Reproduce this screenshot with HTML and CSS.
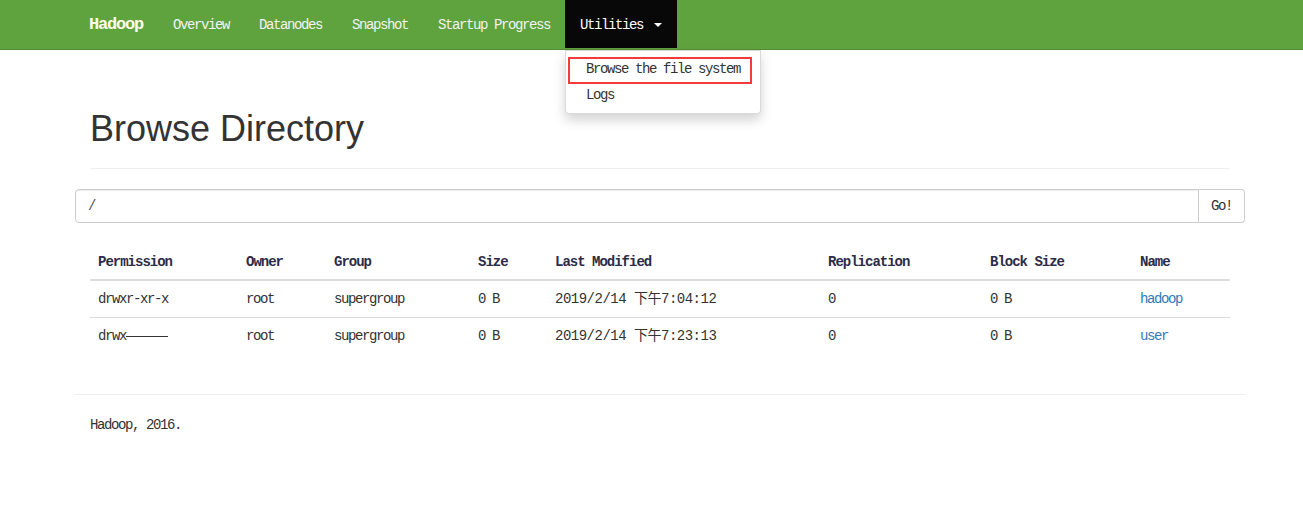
FILE: index.html
```html
<!DOCTYPE html>
<html lang="en">
<head>
<meta charset="utf-8">
<title>Browsing HDFS</title>
<link rel="stylesheet" href="styles.css">
</head>
<body>
<header class="navbar">
  <div class="container nav-inner">
    <a class="brand" href="#">Hadoop</a>
    <ul class="nav">
      <li><a href="#">Overview</a></li>
      <li><a href="#">Datanodes</a></li>
      <li><a href="#">Snapshot</a></li>
      <li><a href="#">Startup Progress</a></li>
      <li class="dropdown open">
        <a href="#" class="dropdown-toggle">Utilities <span class="caret"></span></a>
        <ul class="dropdown-menu">
          <li><a href="#">Browse the file system</a></li>
          <li><a href="#">Logs</a></li>
          <span class="highlight"></span>
        </ul>
      </li>
    </ul>
  </div>
</header>

<main class="container">
  <div class="page-header">
    <h1>Browse Directory</h1>
  </div>

  <form class="input-group">
    <input class="form-control" type="text" value="/">
    <button class="btn" type="button">Go!</button>
  </form>

  <div class="table-wrap">
    <table class="table">
      <colgroup>
        <col class="c-perm"><col class="c-owner"><col class="c-group"><col class="c-size">
        <col class="c-mod"><col class="c-rep"><col class="c-block"><col class="c-name">
      </colgroup>
      <thead>
        <tr>
          <th>Permission</th><th>Owner</th><th>Group</th><th>Size</th>
          <th>Last Modified</th><th>Replication</th><th>Block Size</th><th>Name</th>
        </tr>
      </thead>
      <tbody>
        <tr>
          <td>drwxr-xr-x</td><td>root</td><td>supergroup</td><td>0 B</td>
          <td class="date">2019/2/14 下午7:04:12</td><td>0</td><td>0 B</td><td><a href="#">hadoop</a></td>
        </tr>
        <tr>
          <td>drwx<span class="dash">------</span></td><td>root</td><td>supergroup</td><td>0 B</td>
          <td class="date">2019/2/14 下午7:23:13</td><td>0</td><td>0 B</td><td><a href="#">user</a></td>
        </tr>
      </tbody>
    </table>
  </div>

  <hr class="footer-rule">
  <footer class="footer">
    <p>Hadoop, 2016.</p>
  </footer>
</main>
</body>
</html>
```

FILE: styles.css
```css
* {
  box-sizing: border-box;
}

html, body {
  margin: 0;
  padding: 0;
}

body {
  font-family: "Liberation Mono", "Noto Sans CJK SC", monospace;
  font-size: 14px;
  letter-spacing: -1.4px;
  line-height: 20px;
  color: #333;
  background: #fff;
}

a {
  color: #337ab7;
  text-decoration: none;
}

.container {
  width: 1170px;
  margin-left: 75px;
  padding: 0 15px;
}

/* Navbar */
.navbar {
  background: #5fa33e;
  border-bottom: 1px solid #528f35;
  height: 50px;
  margin-bottom: 20px;
}

.nav-inner {
  display: flex;
  align-items: flex-start;
  height: 49px;
}

.brand {
  font-size: 17px;
  font-weight: bold;
  letter-spacing: -1.2px;
  color: #fffbe6;
  margin-left: -15px;
  padding: 15px 15px 14px 14px;
  line-height: 20px;
}

.nav {
  list-style: none;
  margin: 0;
  padding: 0;
  display: flex;
}

.nav > li {
  position: relative;
}

.nav > li > a {
  display: block;
  padding: 15px 15px 14px;
  line-height: 20px;
  color: #f2f2f2;
}

.nav > li.open > a {
  background: #080808;
  color: #fff;
  height: 48px;
}

.caret {
  display: inline-block;
  width: 0;
  height: 0;
  margin-left: 4px;
  vertical-align: middle;
  border-top: 4px solid #fff;
  border-left: 4px solid transparent;
  border-right: 4px solid transparent;
}

.dropdown-menu {
  position: absolute;
  top: 50px;
  left: 0;
  z-index: 10;
  list-style: none;
  margin: 0;
  padding: 5px 0;
  background: #fff;
  border: 1px solid rgba(0, 0, 0, 0.15);
  border-radius: 0 0 4px 4px;
  box-shadow: 0 6px 12px rgba(0, 0, 0, 0.175);
  white-space: nowrap;
}

.dropdown-menu li a {
  display: block;
  padding: 3px 20px;
  line-height: 20px;
  color: #333;
}

.highlight {
  position: absolute;
  left: 2px;
  top: 6px;
  width: 184px;
  height: 27px;
  border: 2px solid #f53a3a;
}

/* Page header */
.page-header {
  margin: 59px 0 20px;
  padding-bottom: 9px;
  border-bottom: 1px solid #eee;
}

.page-header h1 {
  margin: 0 0 10px;
  font-family: "Liberation Sans", Arial, sans-serif;
  font-size: 36px;
  font-weight: 500;
  line-height: 1.1;
  letter-spacing: 0;
  color: #333;
}

/* Input group */
.input-group {
  display: flex;
  margin: 0 -15px;
}

.form-control {
  flex: 1;
  height: 34px;
  padding: 6px 12px;
  font-family: "Liberation Mono", monospace;
  font-size: 14px;
  letter-spacing: -1.4px;
  color: #555;
  border: 1px solid #ccc;
  border-radius: 4px 0 0 4px;
  box-shadow: inset 0 1px 1px rgba(0, 0, 0, 0.075);
  outline: none;
}

.btn {
  height: 34px;
  padding: 6px 12px;
  font-family: "Liberation Mono", monospace;
  font-size: 14px;
  letter-spacing: -1.4px;
  color: #333;
  background: #fff;
  border: 1px solid #ccc;
  border-left: 0;
  border-radius: 0 4px 4px 0;
}

/* Table */
.table-wrap {
  margin-top: 20px;
}

.table {
  width: 1140px;
  table-layout: fixed;
  border-collapse: collapse;
  margin-bottom: 20px;
}

.c-perm { width: 148px; }
.c-owner { width: 88px; }
.c-group { width: 144px; }
.c-size { width: 77px; }
.c-mod { width: 273px; }
.c-rep { width: 162px; }
.c-block { width: 150px; }
.c-name { width: 98px; }

.table th,
.table td {
  padding: 8px;
  line-height: 20px;
  text-align: left;
  white-space: nowrap;
}

.table th {
  padding-top: 9px;
  padding-bottom: 7px;
  font-weight: bold;
  letter-spacing: -1px;
  color: #2c2c48;
  border-bottom: 2px solid #ddd;
}

.table tbody tr + tr td {
  border-top: 1px solid #ddd;
}

.table td.date {
  letter-spacing: -0.5px;
}

.dash {
  color: transparent;
  text-decoration: line-through;
  text-decoration-color: #333;
  text-decoration-thickness: 1px;
}

/* Footer */
.footer-rule {
  margin: 40px -15px 20px;
  border: 0;
  border-top: 1px solid #eee;
}

.footer p {
  margin: 0;
  line-height: 20px;
}
```
